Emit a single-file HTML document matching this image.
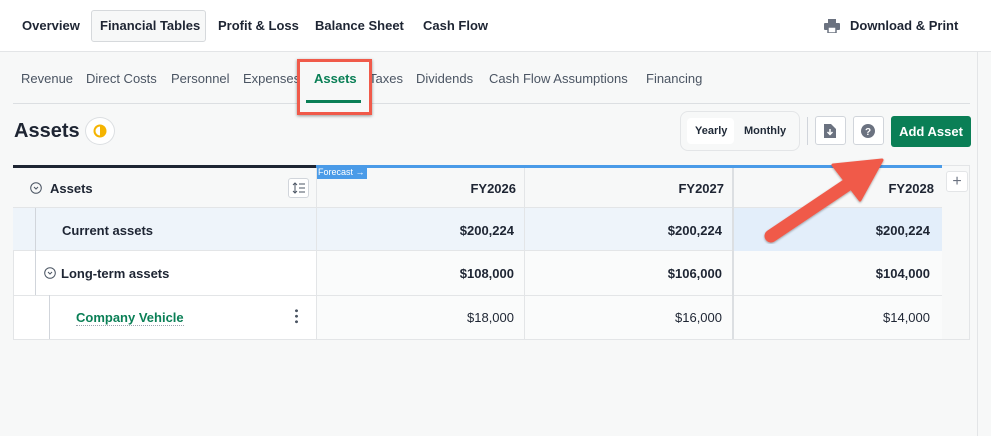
<!DOCTYPE html>
<html><head><meta charset="utf-8"><style>
*{box-sizing:border-box;margin:0;padding:0}
body{width:991px;height:436px;overflow:hidden;background:#f7f8f8;font-family:"Liberation Sans",sans-serif;color:#1f2937;position:relative}
.a{position:absolute}
.top{left:0;top:0;width:991px;height:52px;background:#fff;border-bottom:1px solid #e3e5e7}
.tn{top:18px;font-size:13px;font-weight:bold;color:#1e2533}
.sn{top:71px;font-size:13px;color:#4b5563}
.cell{position:absolute;font-size:13px;font-weight:bold;color:#1e2533;text-align:right}
.btn{background:#fff;border:1px solid #d1d5db;border-radius:3px}
</style></head><body>
<div class="a top"></div>
<div class="a tn" style="left:22px">Overview</div>
<div class="a btn" style="left:91px;top:10px;width:115px;height:32px;background:#f7f8f8;border-color:#d6d9dc"></div>
<div class="a tn" style="left:100px">Financial Tables</div>
<div class="a tn" style="left:218px">Profit &amp; Loss</div>
<div class="a tn" style="left:315px">Balance Sheet</div>
<div class="a tn" style="left:423px">Cash Flow</div>
<svg class="a" style="left:824px;top:19px" width="16" height="14" viewBox="0 0 16 14"><rect x="4" y="0" width="8" height="4" fill="#6b7280"/><rect x="0" y="4" width="16" height="7" rx="1" fill="#6b7280"/><rect x="4" y="8" width="8" height="6" fill="#fff" stroke="#6b7280" stroke-width="1.5"/></svg>
<div class="a tn" style="left:850px">Download &amp; Print</div>
<div class="a" style="left:977px;top:52px;width:1px;height:384px;background:#e3e5e7"></div>

<div class="a sn" style="left:21px">Revenue</div>
<div class="a sn" style="left:86px">Direct Costs</div>
<div class="a sn" style="left:171px">Personnel</div>
<div class="a sn" style="left:243px">Expenses</div>
<div class="a sn" style="left:369px">Taxes</div>
<div class="a sn" style="left:416px">Dividends</div>
<div class="a sn" style="left:489px">Cash Flow Assumptions</div>
<div class="a sn" style="left:646px">Financing</div>
<div class="a" style="left:13px;top:103px;width:957px;height:1px;background:#dcdfe2"></div>
<div class="a" style="left:297px;top:59px;width:75px;height:56px;border:3px solid #f05a4a;box-shadow:0 1px 3px rgba(0,0,0,.4);background:#f7f8f8"></div>
<div class="a sn" style="left:314px;color:#0a7f56;font-weight:bold">Assets</div>
<div class="a" style="left:306px;top:100px;width:55px;height:3px;background:#0a7f56"></div>

<div class="a" style="left:14px;top:120px;font-size:20px;font-weight:bold;color:#1e2533">Assets</div>
<div class="a" style="left:85px;top:117px;width:30px;height:28px;border-radius:50%;background:#fff;border:1px solid #dcdfe2"></div>
<svg class="a" style="left:93px;top:124px" width="14" height="14"><circle cx="7" cy="7" r="5.5" fill="none" stroke="#f5b400" stroke-width="2"/><path d="M7 1.5A5.5 5.5 0 0 1 7 12.5Z" fill="#f5b400"/></svg>

<div class="a" style="left:680px;top:111px;width:120px;height:40px;border:1px solid #e3e5e7;border-radius:8px;background:#f7f8f8"></div>
<div class="a" style="left:687px;top:118px;width:47px;height:26px;background:#fff;border-radius:4px"></div>
<div class="a" style="left:695px;top:125px;font-size:11px;font-weight:bold">Yearly</div>
<div class="a" style="left:744px;top:125px;font-size:11px;font-weight:bold">Monthly</div>
<div class="a" style="left:807px;top:117px;width:1px;height:28px;background:#d1d5db"></div>
<div class="a btn" style="left:815px;top:116px;width:31px;height:29px"></div>
<svg class="a" style="left:824px;top:123px" width="12" height="15" viewBox="0 0 12 15"><path d="M0 1h7l5 5v9H0Z" fill="#6b7280"/><path d="M6 6v5M3.5 9l2.5 2.5L8.5 9" stroke="#fff" stroke-width="1.5" fill="none"/></svg>
<div class="a btn" style="left:853px;top:116px;width:31px;height:29px"></div>
<svg class="a" style="left:861px;top:124px" width="14" height="14"><circle cx="7" cy="7" r="7" fill="#6b7280"/><text x="7" y="11" font-size="10" font-weight="bold" fill="#fff" text-anchor="middle" font-family="Liberation Sans">?</text></svg>
<div class="a" style="left:891px;top:116px;width:80px;height:31px;background:#0a7f56;border-radius:3px;color:#fff;font-size:13px;font-weight:bold;text-align:center;line-height:31px">Add Asset</div>

<div class="a" style="left:13px;top:165px;width:929px;height:175px;background:#fff;border:1px solid #e3e5e7;border-top:none"></div>
<div class="a" style="left:13px;top:165px;width:303px;height:3px;background:#1e2533"></div>
<div class="a" style="left:316px;top:165px;width:626px;height:3px;background:#4a9be8"></div>
<div class="a" style="left:13px;top:168px;width:929px;height:40px;background:#f7f8f8;border-bottom:1px solid #e3e5e7"></div>
<div class="a" style="left:316px;top:166px;width:51px;height:13px;background:#4a9be8;color:#fff;font-size:9px;line-height:13px;padding-left:2px">Forecast →</div>
<div class="a" style="left:13px;top:208px;width:929px;height:43px;background:#eef4fa;border-bottom:1px solid #e3e5e7"></div>
<div class="a" style="left:733px;top:208px;width:209px;height:43px;background:#e3eefa"></div>
<div class="a" style="left:316px;top:251px;width:626px;height:88px;background:#fafbfb"></div>
<div class="a" style="left:13px;top:295px;width:929px;height:1px;background:#e3e5e7"></div>
<div class="a" style="left:316px;top:168px;width:1px;height:171px;background:#e3e5e7"></div>
<div class="a" style="left:524px;top:168px;width:1px;height:171px;background:#e3e5e7"></div>
<div class="a" style="left:732px;top:168px;width:2px;height:171px;background:#dcdfe2"></div>
<div class="a" style="left:35px;top:208px;width:1px;height:87px;background:#d1d5db"></div>
<div class="a" style="left:49px;top:295px;width:1px;height:44px;background:#d1d5db"></div>
<div class="a" style="left:942px;top:165px;width:28px;height:175px;border:1px solid #e3e5e7;border-left:none;background:#f7f8f8"></div>
<div class="a btn" style="left:946px;top:171px;width:22px;height:21px;border-color:#e3e5e7;color:#6b7280;font-size:16px;text-align:center;line-height:19px">+</div>

<svg class="a" style="left:30px;top:182px" width="12" height="12"><circle cx="6" cy="6" r="5.3" fill="none" stroke="#4b5563"/><path d="M4 5l2 2 2-2" stroke="#4b5563" fill="none"/></svg>
<div class="cell" style="left:50px;top:181px">Assets</div>
<div class="a btn" style="left:288px;top:178px;width:21px;height:20px;border-color:#d1d5db"></div>
<svg class="a" style="left:292px;top:182px" width="13" height="12"><path d="M3 1v10M1 3l2-2 2 2M1 9l2 2 2-2M7 2h6M7 6h6M7 10h6" stroke="#4b5563" fill="none"/></svg>
<div class="cell" style="left:62px;top:223px">Current assets</div>
<svg class="a" style="left:44px;top:267px" width="12" height="12"><circle cx="6" cy="6" r="5.3" fill="none" stroke="#4b5563"/><path d="M4 5l2 2 2-2" stroke="#4b5563" fill="none"/></svg>
<div class="cell" style="left:61px;top:266px">Long-term assets</div>
<div class="a" style="left:76px;top:310px;font-size:13px;font-weight:bold;color:#0a7f56;border-bottom:1px dotted #9ca3af">Company Vehicle</div>
<div class="a" style="left:295px;top:308px;width:3px;height:16px;background:radial-gradient(circle,#4b5563 1.3px,transparent 1.6px) 0 0/3px 5.5px"></div>

<div class="cell" style="left:320px;width:196px;top:181px">FY2026</div>
<div class="cell" style="left:528px;width:196px;top:181px">FY2027</div>
<div class="cell" style="left:736px;width:198px;top:181px">FY2028</div>
<div class="cell" style="left:320px;width:194px;top:223px">$200,224</div>
<div class="cell" style="left:528px;width:194px;top:223px">$200,224</div>
<div class="cell" style="left:736px;width:194px;top:223px">$200,224</div>
<div class="cell" style="left:320px;width:194px;top:266px">$108,000</div>
<div class="cell" style="left:528px;width:194px;top:266px">$106,000</div>
<div class="cell" style="left:736px;width:194px;top:266px">$104,000</div>
<div class="cell" style="left:320px;width:194px;top:310px;font-weight:normal">$18,000</div>
<div class="cell" style="left:528px;width:194px;top:310px;font-weight:normal">$16,000</div>
<div class="cell" style="left:736px;width:194px;top:310px;font-weight:normal">$14,000</div>

<svg class="a" style="left:0;top:0" width="991" height="436"><defs><filter id="s"><feDropShadow dx="0" dy="1" stdDeviation="1" flood-opacity=".35"/></filter></defs>
<g filter="url(#s)"><line x1="771" y1="236" x2="850" y2="183" stroke="#f05a4a" stroke-width="13" stroke-linecap="round"/><path d="M833 165L882 160L860 200Z" fill="#f05a4a" stroke="#f05a4a" stroke-width="3" stroke-linejoin="round"/></g></svg>
</body></html>
